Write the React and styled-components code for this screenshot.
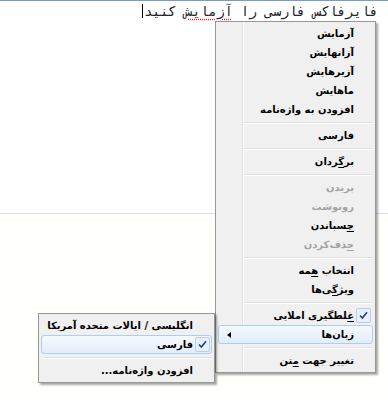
import React from 'react';
import styled, { createGlobalStyle, css } from 'styled-components';

const GlobalStyle = createGlobalStyle`
  html, body { margin: 0; padding: 0; background: #fff; }
`;

const Page = styled.div`
  position: relative;
  width: 388px;
  height: 400px;
  overflow: hidden;
  background: #fffffb;
`;

const TextBox = styled.div`
  height: 209px;
  background: #fff;
  border-top: 1px solid #7a9cbf;
  border-bottom: 1px solid #d6dfe8;
  direction: rtl;
  padding: 3px 10px 0 0;
  font-family: "DejaVu Sans Mono", monospace;
  font-size: 13.4px;
  line-height: 16px;
  color: #22222e;
`;

const Spell = styled.span`
  text-decoration: underline dotted #e02020;
  text-underline-offset: 3px;
`;

const Caret = styled.span`
  display: inline-block;
  width: 1px;
  height: 14px;
  margin-right: 1px;
  background: #000;
  vertical-align: -2px;
`;

const Menu = styled.div`
  position: absolute;
  left: ${p => p.$left}px;
  top: ${p => p.$top}px;
  width: ${p => p.$width}px;
  box-sizing: border-box;
  padding: 2px;
  border: 1px solid #979797;
  background: ${p => p.$gutter
    ? 'linear-gradient(to right, #f0f0f0 26px, #e2e3e3 26px 27px, #fff 27px 28px, #f0f0f0 28px)'
    : '#f0f0f0'};
  box-shadow: 2px 2px 2px rgba(0, 0, 0, 0.35);
  direction: rtl;
  font-family: "DejaVu Sans", sans-serif;
  font-size: 10px;
  font-weight: bold;
`;

const Item = styled.div`
  display: flex;
  align-items: center;
  height: 19px;
  box-sizing: border-box;
  border: 1px solid transparent;
  border-radius: 3px;
  color: ${p => (p.$disabled ? '#a3a3a3' : '#000')};
  white-space: nowrap;
  ${p => p.$active && css`
    background: linear-gradient(#f5f9fe, #e2edfa);
    border-color: #aecdf2;
  `}
`;

const IconCol = styled.div`
  width: 18px;
  height: 100%;
  display: flex;
  align-items: center;
  justify-content: center;
  flex: none;
`;

const CheckBox = styled.div`
  width: 15px;
  height: 15px;
  box-sizing: border-box;
  border: 1px solid #b7cfee;
  border-radius: 2px;
  background: #e8f0fb;
  display: flex;
  align-items: center;
  justify-content: center;
`;

const Label = styled.div`
  flex: 1;
  u { text-decoration: underline; text-underline-offset: 2px; }
`;

const Arrow = styled.div`
  width: 0;
  height: 0;
  margin-left: 8px;
  border-top: 3.5px solid transparent;
  border-bottom: 3.5px solid transparent;
  border-right: 4px solid #000;
`;

const Separator = styled.div`
  height: 7px;
  display: flex;
  align-items: center;
  &::after {
    content: '';
    flex: 1;
    height: 1px;
    background: #e0e0e0;
    border-bottom: 1px solid #fff;
    margin-left: ${p => p.$indent}px;
  }
`;

function Check() {
  return (
    <CheckBox>
      <svg width="9" height="9" viewBox="0 0 9 9">
        <path d="M1 4.5 L3.4 7 L8 1.2" fill="none" stroke="#1c3f94" strokeWidth="1.6" />
      </svg>
    </CheckBox>
  );
}

function MenuItem({ children, disabled, active, checked, arrow }) {
  return (
    <Item $disabled={disabled} $active={active}>
      <IconCol>{checked && <Check />}</IconCol>
      <Label>{children}</Label>
      {arrow && <Arrow />}
    </Item>
  );
}

export default function App() {
  return (
    <Page>
      <GlobalStyle />
      <TextBox>
        فایرفاکس فارسی را <Spell>آزمایش</Spell> کنید<Caret />
      </TextBox>

      <Menu $left={215} $top={21} $width={161} $gutter>
        <MenuItem>آزمایش</MenuItem>
        <MenuItem>آزانهایش</MenuItem>
        <MenuItem>آزیرهایش</MenuItem>
        <MenuItem>ماهایش</MenuItem>
        <MenuItem>افزودن به واژه‌نامه</MenuItem>
        <Separator $indent={26} />
        <MenuItem>فارسی</MenuItem>
        <Separator $indent={26} />
        <MenuItem>بر<u>گ</u>ردان</MenuItem>
        <Separator $indent={26} />
        <MenuItem disabled>بریدن</MenuItem>
        <MenuItem disabled>رونوشت</MenuItem>
        <MenuItem><u>چ</u>سباندن</MenuItem>
        <MenuItem disabled><u>ح</u>ذف‌کردن</MenuItem>
        <Separator $indent={26} />
        <MenuItem>انتخاب <u>ه</u>مه</MenuItem>
        <MenuItem>ویژ<u>گ</u>ی‌ها</MenuItem>
        <Separator $indent={26} />
        <MenuItem checked><u>غ</u>لطگیری املایی</MenuItem>
        <MenuItem active arrow>زبان‌ها</MenuItem>
        <Separator $indent={26} />
        <MenuItem>تغییر جهت <u>م</u>تن</MenuItem>
      </Menu>

      <Menu $left={38} $top={313} $width={177}>
        <MenuItem>انگلیسی / ایالات متحده آمریکا</MenuItem>
        <MenuItem active checked>فارسی</MenuItem>
        <Separator $indent={2} />
        <MenuItem>افزودن واژه‌نامه...</MenuItem>
      </Menu>
    </Page>
  );
}
